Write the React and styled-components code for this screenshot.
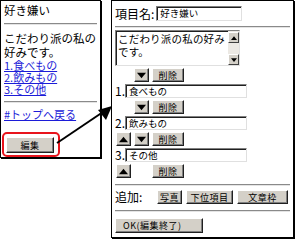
import React from "react";
import styled, { createGlobalStyle } from "styled-components";

const GlobalStyle = createGlobalStyle`
  html, body { margin: 0; padding: 0; background: #fff; }
  body { font-family: "Noto Sans CJK JP", sans-serif; }
`;

const Stage = styled.div`
  position: relative;
  width: 296px;
  height: 241px;
  display: flex;
  align-items: flex-start;
  gap: 10px;
`;

const Panel = styled.div`
  box-sizing: border-box;
  flex: none;
  width: ${({ $w }) => $w}px;
  height: ${({ $h }) => $h}px;
  border: 1px solid #000;
  box-shadow: 1px 1px 0 #000;
  background-color: #fff;
  background-image: radial-gradient(circle at 1px 1px, #cfcfcf 0.6px, transparent 0.7px);
  background-size: 8px 8px;
  display: flex;
  flex-direction: column;
`;

const LeftPanel = styled(Panel)`
  padding: 2px 0 0 3px;
  font-size: 11.5px;
  color: #000;
`;

const RightPanel = styled(Panel)`
  padding: 3px 0 0 3px;
`;

const Title = styled.div`
  font-size: 11.5px;
  line-height: 14px;
`;

const Rule = styled.div`
  height: 0;
  border-top: 1px solid #8a8a8a;
  border-bottom: 1px solid #e4e4e4;
  margin: ${({ $m }) => $m || "6px 3px 6px 0"};
`;

const Para = styled.div`
  line-height: 14px;
`;

const LinkList = styled.div`
  display: flex;
  flex-direction: column;
`;

const Link = styled.a`
  color: #1c1cd8;
  text-decoration: underline;
  line-height: 12px;
  height: 12px;
  font-size: 11px;
  width: fit-content;
  white-space: nowrap;
`;

const Highlight = styled.div`
  align-self: flex-start;
  margin: 12px 0 0 -2px;
  padding: 3px 4px 2px 2px;
  border: 2px solid #e8141c;
  border-radius: 5px;
  display: flex;
`;

const Btn = styled.button`
  box-sizing: border-box;
  flex: none;
  height: ${({ $h }) => $h || 14}px;
  width: ${({ $w }) => ($w ? `${$w}px` : "auto")};
  padding: 0;
  margin: 0;
  font-family: "Noto Sans CJK JP", sans-serif;
  font-size: 9px;
  line-height: 1;
  white-space: nowrap;
  color: #000;
  background: #d4d0c8;
  border: 1px solid;
  border-color: #fff #202020 #202020 #fff;
  box-shadow: inset -1px -1px 0 #808080;
  display: flex;
  align-items: center;
  justify-content: ${({ $left }) => ($left ? "flex-start" : "center")};
  padding-left: ${({ $left }) => ($left ? "7px" : "0")};
  letter-spacing: 0.5px;
  visibility: ${({ $hidden }) => ($hidden ? "hidden" : "visible")};
`;

const Field = styled.div`
  box-sizing: border-box;
  width: ${({ $w }) => $w}px;
  height: ${({ $h }) => $h || 14}px;
  background: #fff;
  border: 1px solid;
  border-color: #808080 #e0e0e0 #e0e0e0 #808080;
  box-shadow: inset 1px 1px 0 #202020;
  font-size: 9.5px;
  line-height: 11px;
  padding: 1px 0 0 3px;
  white-space: nowrap;
  overflow: hidden;
`;

const Row = styled.div`
  display: flex;
  align-items: center;
  gap: ${({ $gap }) => $gap ?? 4}px;
  margin: ${({ $m }) => $m || "0"};
`;

const Label = styled.span`
  font-size: ${({ $fs }) => $fs || 12}px;
  line-height: 14px;
  color: #000;
  width: ${({ $w }) => ($w ? `${$w}px` : "auto")};
  white-space: nowrap;
`;

const TextArea = styled.div`
  box-sizing: border-box;
  width: 125px;
  height: 36px;
  display: flex;
  background: #fff;
  border: 1px solid;
  border-color: #808080 #e0e0e0 #e0e0e0 #808080;
  box-shadow: inset 1px 1px 0 #202020;
`;

const AreaText = styled.div`
  flex: 1;
  font-size: 10.5px;
  line-height: 13px;
  padding: 1px 0 0 2px;
  letter-spacing: 0.2px;
`;

const Scroll = styled.div`
  width: 11px;
  display: flex;
  flex-direction: column;
  justify-content: space-between;
  background: #ece9e4;
  padding: 1px 0 0;
`;

const ScrollBtn = styled.div`
  box-sizing: border-box;
  height: 11px;
  background: #d4d0c8;
  border: 1px solid;
  border-color: #fff #404040 #404040 #fff;
  display: flex;
  align-items: center;
  justify-content: center;
`;

const Tri = ({ up, size = 7 }) => (
  <svg width={size} height={size - 2} viewBox="0 0 8 5">
    <polygon points={up ? "0,5 8,5 4,0" : "0,0 8,0 4,5"} fill="#000" />
  </svg>
);

const MoveBtn = ({ up, hidden }) => (
  <Btn $w={15} $h={14} $hidden={hidden}>
    <Tri up={up} size={9} />
  </Btn>
);

const Item = ({ n, text, first, last }) => (
  <>
    <Row $gap={2} $m="2px 0 0">
      <Label $w={8}>{n}.</Label>
      <Field $w={122}>{text}</Field>
    </Row>
    <Row $gap={3} $m="2px 0 0 1px">
      <MoveBtn up hidden={first} />
      <MoveBtn hidden={last} />
      <Btn $w={32}>削除</Btn>
    </Row>
  </>
);

const Arrow = styled.svg`
  position: absolute;
  left: 0;
  top: 0;
  pointer-events: none;
`;

const App = () => (
  <>
    <GlobalStyle />
    <Stage>
      <LeftPanel $w={101} $h={158}>
        <Title>好き嫌い</Title>
        <Rule />
        <Para>
          こだわり派の私の
          <br />
          好みです。
        </Para>
        <LinkList>
          <Link>1.食べもの</Link>
          <Link>2.飲みもの</Link>
          <Link>3.その他</Link>
        </LinkList>
        <Rule $m="6px 3px 5px 0" />
        <Link>#トップへ戻る</Link>
        <Highlight>
          <Btn $w={48} $h={16}>編集</Btn>
        </Highlight>
      </LeftPanel>

      <RightPanel $w={183} $h={238}>
        <Row $gap={2} $m="2px 0 0">
          <Label>項目名:</Label>
          <Field $w={86} $h={15}>好き嫌い</Field>
        </Row>
        <Rule $m="5px 3px 2px 0" />
        <TextArea>
          <AreaText>
            こだわり派の私の好み
            <br />
            です。
          </AreaText>
          <Scroll>
            <ScrollBtn>
              <Tri up size={6} />
            </ScrollBtn>
            <ScrollBtn>
              <Tri size={6} />
            </ScrollBtn>
          </Scroll>
        </TextArea>
        <Row $gap={3} $m="2px 0 0 1px">
          <MoveBtn up hidden />
          <MoveBtn />
          <Btn $w={32}>削除</Btn>
        </Row>
        <Item n={1} text="食べもの" first />
        <Item n={2} text="飲みもの" />
        <Item n={3} text="その他" last />
        <Rule $m="6px 3px 4px 0" />
        <Row $gap={4}>
          <Label $w={38}>追加:</Label>
          <Btn $w={25}>写真</Btn>
          <Btn $w={47}>下位項目</Btn>
          <Btn $w={51}>文章枠</Btn>
        </Row>
        <Rule $m="6px 3px 6px 0" />
        <Btn $w={88} $h={15} $left>
          OK(編集終了)
        </Btn>
      </RightPanel>

      <Arrow width="296" height="241">
        <line x1="57" y1="143" x2="103" y2="112" stroke="#000" strokeWidth="2" />
        <polygon points="112,106 98,110 106,120" fill="#000" />
      </Arrow>
    </Stage>
  </>
);

export default App;
